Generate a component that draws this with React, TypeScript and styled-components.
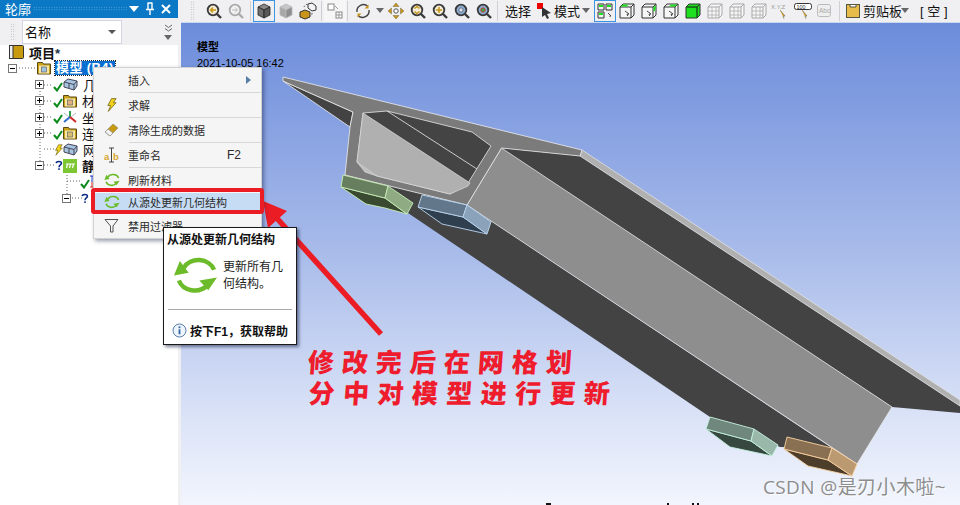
import React from "react";
import styled, { createGlobalStyle } from "styled-components";

const Global = createGlobalStyle`
  html, body { margin: 0; padding: 0; width: 960px; height: 505px; overflow: hidden; background: #f0f0f2; }
  #root { width: 960px; height: 505px; }
  * { box-sizing: border-box; }
`;

const UI = `"Liberation Sans", "Noto Sans CJK SC", sans-serif`;

const Page = styled.div`
  position: relative; display: flex; width: 960px; height: 505px; overflow: hidden;
  font-family: ${UI}; color: #111;
`;
const Sidebar = styled.aside`
  width: 178px; margin-right: 3px; flex: none; display: flex; flex-direction: column; background: #fff;
`;
const TitleBar = styled.header`
  height: 18px; background: #0a78c4; color: #fff; display: flex; align-items: center;
  padding: 0 9px 1px 5px; font-size: 13px; gap: 2px; white-space: nowrap;
`;
const TitleText = styled.span`flex: none;`;
const TitleGrip = styled.span`
  width: 94px; height: 5px; flex: none;
  background-image: radial-gradient(circle, #6db4e4 0.7px, transparent 0.8px);
  background-size: 2.5px 2.5px;
`;
const TitleIcons = styled.span`display: flex; align-items: center; gap: 6px; margin-left: auto;`;
const FilterRow = styled.div`
  height: 27px; background: #f0f0f2; display: flex; align-items: center; padding: 0 3px 0 10px; gap: 6px;
`;
const Grip = styled.span<{ $h: number }>`
  width: 6px; height: ${p => p.$h}px; flex: none;
  background-image: radial-gradient(circle, #a8a8a8 0.7px, transparent 0.8px);
  background-size: 2.5px 2.5px;
`;
const FilterSelect = styled.div`
  width: 100px; height: 24px; background: #fff; border: 1px solid #d4d4e2; display: flex; align-items: center;
  justify-content: space-between; padding: 0 5px 0 2px; font-size: 13px;
`;
const Caret = styled.span`
  width: 0; height: 0; border-left: 4px solid transparent; border-right: 4px solid transparent;
  border-top: 4px solid #555;
`;
const FilterMore = styled.div`
  margin-left: auto; width: 14px; display: flex; flex-direction: column; align-items: center; gap: 3px; padding-top: 1px;
`;
const Tree = styled.div`position: relative; flex: 1;`;
const TreeLines = styled.svg`position: absolute; left: 0; top: 0; pointer-events: none;`;
const Row = styled.div<{ $indent: number }>`
  position: relative; height: 16.25px; display: flex; align-items: center; padding: 0 0 2px ${p => p.$indent}px;
  font-size: 13px; white-space: nowrap;
  & > * { flex: none; }
`;
/* rows whose labels run under the context menu stop at its left edge */
const CoveredRow = styled(Row)`width: 94px; overflow: hidden;`;
const Expander = styled.span`
  width: 9px; height: 9px; flex: none; border: 1px solid #777; background: #fff; position: relative; display: block;
  &::before { content: ""; position: absolute; left: 1px; top: 3px; width: 5px; height: 1px; background: #000; }
`;
const ExpanderPlus = styled(Expander)`
  &::after { content: ""; position: absolute; left: 3px; top: 1px; width: 1px; height: 5px; background: #000; }
`;
const Slot = styled.span<{ $w: number }>`
  width: ${p => p.$w}px; flex: none; display: flex; align-items: center; justify-content: flex-end;
`;
const CheckMark = styled.svg`margin-top: 4px; flex: none;`;
const Label = styled.span<{ $bold?: boolean }>`
  margin-left: 5px; font-weight: ${p => (p.$bold ? 700 : 400)};
`;
const Selected = styled.span`
  margin-left: 4px; padding: 0 1px; background: #0a6fd0; color: #fff; font-weight: 700;
  outline: 1px dotted #222; line-height: 14px; letter-spacing: .4px;
`;
const Star = styled.span`color: #234;`;

const Main = styled.main`flex: 1; display: flex; flex-direction: column; min-width: 0;`;
const Toolbar = styled.nav`
  height: 23px; flex: none; display: flex; align-items: center; padding: 0 0 1px 9px; background: #f0f0f2;
  border-bottom: 1px solid #c9d6ee; font-size: 13px;
`;
const ToolGrip = styled(Grip)`margin-right: 8px; width: 5px;`;
const ToolBtn = styled.span<{ $active?: boolean; $dim?: boolean }>`
  width: 22px; height: 22px; flex: none; display: flex; align-items: center; justify-content: center;
  border: 1px solid ${p => (p.$active ? "#3d94e0" : "transparent")};
  background: ${p => (p.$dim ? "#f6f6f7" : "transparent")};
`;
const Sep = styled.span<{ $m: number }>`
  width: 1px; height: 20px; background: #d0d0d4; flex: none; margin: 0 ${p => p.$m}px;
`;
const ToolCaret = styled.span<{ $pull?: number }>`
  width: 11px; flex: none; display: flex; justify-content: center; margin-left: ${p => p.$pull ?? 0}px;
`;
const ToolText = styled.span<{ $ml?: number }>`
  flex: none; margin-left: ${p => p.$ml ?? 0}px; white-space: nowrap;
`;
const Viewport = styled.section`
  position: relative; flex: 1; overflow: hidden;
  background: linear-gradient(180deg, #6c8cdb 0%, #a9bcea 48%, #dbe3f7 82%, #f2f5fd 100%);
`;
const Drawing = styled.svg`position: absolute; left: 0; top: 0;`;
const ModelTitle = styled.div`
  position: absolute; left: 16px; top: 16px; font-size: 11px; line-height: 16px; color: #000;
`;
const ModelName = styled.div`font-weight: 700;`;
const Annotation = styled.div`
  position: absolute; left: 126px; top: 322px; color: #ee1c2c; font-family: "Noto Sans CJK SC", sans-serif;
  font-weight: 900; font-size: 26px; line-height: 31px; white-space: nowrap;
  transform: skewX(-4deg);
`;
const AnnotationLine = styled.div<{ $ml: number; $gap: number }>`
  margin-left: ${p => p.$ml}px; letter-spacing: ${p => p.$gap}px;
`;
const Watermark = styled.div`
  position: absolute; right: 14px; bottom: 8px; font-size: 19px; line-height: 20px; letter-spacing: .4px; color: #8d8d8d;
  font-family: "Open Sans", "Noto Sans CJK SC", sans-serif; text-shadow: 1px 1px 1px #fff;
`;

const Menu = styled.div`
  position: absolute; left: 93px; top: 67px; width: 169px; height: 172px; background: #f5f5f5;
  border: 1px solid #d2d2d2; box-shadow: 2px 2px 4px rgba(20, 30, 70, .45); font-size: 11px; color: #2b2b2b;
`;
const MenuRow = styled.div<{ $h?: number; $hot?: boolean }>`
  display: flex; align-items: center; height: ${p => p.$h ?? 25}px; position: relative; padding-bottom: ${p => (p.$hot ? 3 : 2)}px;
  background: ${p => (p.$hot ? "#c6dcf4" : "transparent")};
`;
const MenuIcon = styled.span`width: 35px; flex: none; display: flex; justify-content: center; margin-right: -1px;`;
const MenuText = styled.span`flex: 1;`;
const Shortcut = styled.span`margin-right: 20px; font-size: 12px;`;
const SubArrow = styled.span`
  width: 0; height: 0; margin-right: 10px; border-top: 4px solid transparent; border-bottom: 4px solid transparent;
  border-left: 5px solid #5a7ca8;
`;
const MenuSep = styled.div`height: 1px; margin: -1px 0 0 35px; background: #d8d8d8; position: relative;`;
const RedBox = styled.div`
  position: absolute; left: -3px; right: -3px; top: -5px; bottom: 0; border: 4px solid #ec1c24; border-radius: 3px;
`;
const Tip = styled.div`
  position: absolute; left: 163px; top: 227px; width: 134px; height: 118px; background: #fff; border: 1px solid #1a1a1a;
  box-shadow: 2px 2px 3px rgba(20, 30, 70, .55); padding: 4px 4px 0 3px; display: flex; flex-direction: column;
`;
const TipTitle = styled.div`font-size: 12px; font-weight: 700; line-height: 16px; white-space: nowrap;`;
const TipBody = styled.div`
  display: flex; align-items: center; gap: 5px; margin-top: 5px; padding-left: 6px; font-size: 12px; line-height: 17px; color: #222;
  white-space: nowrap;
  & > svg { flex: none; }
  & > span { margin-top: 4px; }
`;
const TipRule = styled.div`height: 1px; background: #aaa; margin: 14px 0 0 1px;`;
const TipHelp = styled.div`
  display: flex; align-items: center; gap: 3px; margin-top: 12px; padding-left: 5px; font-size: 12px; font-weight: 700; white-space: nowrap;
  & > svg { flex: none; }
`;

const Check = () => (
  <CheckMark width="10" height="10" viewBox="0 0 10 10"><path d="M1 5l3 3.500L9 1" fill="none" stroke="#0a8a1a" strokeWidth="2" /></CheckMark>
);
const Question = () => (
  <svg width="8" height="13" viewBox="0 0 10 13"><path d="M1.500 3.500C2 .8 8 .6 8 3.600c0 2.200-3 2.300-3 5" fill="none" stroke="#0a2a8a" strokeWidth="2" /><rect x="4" y="10" width="2" height="2" fill="#0a2a8a" /></svg>
);
const Bolt = ({ size = 11 }: { size?: number }) => (
  <svg width={size} height={size + 3} viewBox="0 0 12 15"><path d="M6 .5h5L8 5h3L2.500 14.500 5 8H2z" fill="#f2d21c" stroke="#6a5a10" strokeWidth=".8" /></svg>
);
const Book = () => (
  <svg width="15" height="14" viewBox="0 0 15 14"><rect x=".5" y=".5" width="14" height="13" rx="1" fill="#c89a10" stroke="#333" /><rect x=".5" y=".5" width="3.500" height="13" fill="#eee" stroke="#333" /></svg>
);
const Folder = ({ inner }: { inner: string }) => (
  <svg width="14" height="14" viewBox="0 0 14 14"><path d="M.5 3V1.500h5l1 1.500h7v10H.5z" fill="#c9a21a" stroke="#5a4a10" /><rect x="2" y="4.500" width="10" height="8" fill="#f5e6a8" /><rect x="4.500" y="6" width="5" height="5" fill={inner} stroke="#555" strokeWidth=".6" /></svg>
);
const Blocks = () => (
  <svg width="15" height="14" viewBox="0 0 15 14"><path d="M1 4l4-3 9 2v5l-3 4-10-3z" fill="#a8c4e0" stroke="#445" /><path d="M1 4l10 2.500V12M11 6.500L14 3M6 5.200V10" fill="none" stroke="#445" /></svg>
);
const Axes = () => (
  <svg width="14" height="14" viewBox="0 0 14 14"><path d="M7 7V1" stroke="#2aa050" strokeWidth="2" /><path d="M7 7L1 12" stroke="#3070d0" strokeWidth="2" /><path d="M7 7l6 5" stroke="#d02828" strokeWidth="2" /><path d="M1 3l5 4M13 3L8 7" stroke="#bbb" /></svg>
);
const GreenBox = () => (
  <svg width="14" height="14" viewBox="0 0 14 14"><rect width="14" height="14" fill="#7dc832" /><path d="M3 5h9M4.500 5L3.500 9M7.500 5L6.500 9M10.500 5L9.500 9" stroke="#fff" strokeWidth="1.200" /></svg>
);
const BeamSliver = () => (
  <svg width="4" height="14" viewBox="0 0 4 14"><path d="M0 1h4M2 1v6" stroke="#1a3ac8" /><path d="M2 7v5M0 12h4" stroke="#d82020" /></svg>
);
const Refresh = ({ size = 16 }: { size?: number }) => (
  <svg width={size} height={size * 0.94} viewBox="0 0 46 43">
    <path d="M11 15A17 15 0 0 1 42 17M6 28A17 15 0 0 0 35 33" fill="none" stroke="#6cbb2a" strokeWidth="4.500" />
    <path d="M1 23L7 8 16 20zM27 28L45 25 36 38z" fill="#6cbb2a" />
  </svg>
);
const Eraser = () => (
  <svg width="15" height="15" viewBox="0 0 15 15"><path d="M1 10l8-8 5 4-8 8z" fill="#c89a10" stroke="#887" strokeWidth=".6" /><path d="M1 10l3-3 5 4-3 3z" fill="#f3f3f3" stroke="#888" strokeWidth=".7" /></svg>
);
const RenameIcon = () => (
  <svg width="16" height="16" viewBox="0 0 16 16">
    <text x="0" y="13" fontSize="9.500" fontWeight="700" fill="#d8a52c" fontFamily="Liberation Sans">a</text>
    <text x="9" y="13" fontSize="9.500" fontWeight="700" fill="#d8a52c" fontFamily="Liberation Sans">b</text>
    <path d="M5 1h5M5 15h5M7.500 1v14" stroke="#444" />
  </svg>
);
const Funnel = () => (
  <svg width="15" height="15" viewBox="0 0 15 15"><path d="M1 1.500h13L9 8v6H6.500V8z" fill="none" stroke="#555" /></svg>
);
const Info = () => (
  <svg width="15" height="15" viewBox="0 0 15 15"><circle cx="7.500" cy="7.500" r="6.500" fill="#eef4fb" stroke="#5a7ea8" /><rect x="6.600" y="6.300" width="1.800" height="5" fill="#2f66a8" /><rect x="6.600" y="3.400" width="1.800" height="1.800" fill="#2f66a8" /></svg>
);

const Mag = ({ fill = "#f3ecd8", ring = "#3a3a3a", mark }: { fill?: string; ring?: string; mark: React.ReactNode }) => (
  <svg width="16" height="16" viewBox="0 0 16 16">
    <circle cx="7" cy="7" r="5.300" fill={fill} stroke={ring} strokeWidth="1.800" />
    <path d="M11 11l4 4" stroke={ring} strokeWidth="2.400" />
    {mark}
  </svg>
);
const Gold = "#c8951a";
const Cube = ({ top, left, right, line }: { top: string; left: string; right: string; line: string }) => (
  <svg width="16" height="16" viewBox="0 0 16 16">
    <path d="M8 1l6 3-6 3-6-3z" fill={top} stroke={line} strokeWidth=".8" />
    <path d="M2 4l6 3v8l-6-3z" fill={left} stroke={line} strokeWidth=".8" />
    <path d="M14 4L8 7v8l6-3z" fill={right} stroke={line} strokeWidth=".8" />
  </svg>
);
const FaceCube = ({ face, dim }: { face: string; dim?: boolean }) => {
  const c = dim ? "#a8a8a8" : "#333";
  const g = "#1fe01f";
  return (
    <svg width="16" height="16" viewBox="0 0 16 16">
      <path d="M1 4l3-3h11v11l-3 3H1z" fill={face === "all" ? g : "#f6f6f6"} stroke={c} />
      <path d="M1 4h11v11M12 4l3-3" fill="none" stroke={c} />
      {face === "top" && <path d="M1.500 3.600L4 1.500h6L7.500 3.600z" fill={g} />}
      {face === "right" && <path d="M12.500 4L14.600 2v5l-2.100 2z" fill={g} />}
      {face === "corner" && <path d="M8 1.500h6.500L12 3.600H6z" fill={g} />}
      {face === "grid" && <path d="M5 4v11M9 4v11M1 8h11M1 12h11" stroke={c} strokeWidth=".7" />}
      {face !== "grid" && face !== "all" && <path d="M6 8l4 3-2 .4.8 1.600" fill="none" stroke="#444" />}
      {face === "all" && <path d="M12 4v11M1 4h11" stroke="#0a6a0a" />}
    </svg>
  );
};
const SmallCaret = () => (
  <svg width="8" height="5" viewBox="0 0 8 5"><path d="M0 0h8L4 5z" fill="#666" /></svg>
);

const m = (s: string) => <path d={s} stroke={Gold} strokeWidth="1.500" fill="none" />;

const Model = () => (
  <Drawing width="779" height="482" viewBox="181 23 779 482">
    <polygon points="345,175 467,205 832,448 780,447 710,417 408,213" fill="#434343" />
    <polygon points="283,81 353,112 350,127" fill="#434343" stroke="#eee" strokeWidth=".8" />
    <polygon points="501,148 580,156 960,406 960,413 892,407" fill="#434343" />
    <polygon points="582,150 960,400 960,406 580,156" fill="#b0b0b0" stroke="#e8e8e8" strokeWidth=".7" />
    <polygon points="501.5,148 892,407 857,464 467,205" fill="#8e8e8e" stroke="#eee" strokeWidth=".7" />
    <polygon points="283,77 582,150 580,156 501.5,148 467,205 345,175 350,127 353,112 283,81" fill="#7b7b7b" stroke="#ececec" strokeWidth=".8" />
    <polygon points="363,113 387,111 472,132 491,146 468,183 450,194 377,176 357,162" fill="#444" stroke="#e8e8e8" strokeWidth=".8" />
    <polygon points="363,113 470,183 468,186 450,194 377,176 357,162" fill="#b0b0b0" stroke="#ddd" strokeWidth=".7" />
    <path d="M357,162 L365,172 377,176" stroke="#ddd" strokeWidth=".7" fill="#c0c0c0" />
    <path d="M387,111 L477,169" stroke="#eee" strokeWidth=".8" />
    <g stroke="#c9efb8" strokeWidth=".9">
      <polygon points="341,187 385,198 407,214 385,208 366,204" fill="#394a30" />
      <polygon points="343,175 388,186 385,198 341,187" fill="#677f5e" />
      <polygon points="388,186 413,203 407,214 385,198" fill="#8eab84" />
    </g>
    <g stroke="#bcd6f0" strokeWidth=".9">
      <polygon points="418,207 463,217 487,234 442,224" fill="#2f3f4e" />
      <polygon points="422,195 467,205 463,217 418,207" fill="#62778a" />
      <polygon points="467,205 491,222 487,234 463,217" fill="#8aa3ba" />
    </g>
    <g stroke="#c4f0e0" strokeWidth=".9">
      <polygon points="706,429 751,441 772,456 730,447" fill="#36483f" />
      <polygon points="710,417 754,429 751,441 706,429" fill="#6f877d" />
      <polygon points="754,429 778,445 772,456 751,441" fill="#9ab8aa" />
    </g>
    <g stroke="#f8d0a0" strokeWidth=".9">
      <polygon points="784,449 828,460 852,476 808,466" fill="#4d3d2b" />
      <polygon points="787,437 832,448 828,460 784,449" fill="#8a7052" />
      <polygon points="832,448 857,464 852,476 828,460" fill="#bb9a72" />
    </g>
    <path d="M546 504h5M668 503v2M693 503v2M698 503v2" stroke="#111" strokeWidth="2" />
    <path d="M381 334L274 215" stroke="#ec1c24" strokeWidth="5.500" />
    <polygon points="263,201 287,211 268,228" fill="#ec1c24" />
  </Drawing>
);

const lines = "M40 52V61M13 70V72M16 68H37M40 85V165M44 85H52M44 101H52M44 117H52M44 133H52M44 149H62M44 165H55M67 172V194M67 181H80M72 198H82";

export default function App() {
  return (
    <Page>
      <Global />
      <Sidebar>
        <TitleBar>
          <TitleText>轮廓</TitleText>
          <TitleGrip />
          <TitleIcons>
            <svg width="10" height="6" viewBox="0 0 10 6"><path d="M0 0h10L5 6z" fill="#fff" /></svg>
            <svg width="10" height="13" viewBox="0 0 10 13"><path d="M2.500 1h5M3 1v6M7 1v6M1 7.500h8M5 8v5" stroke="#fff" strokeWidth="1.400" fill="none" /></svg>
            <svg width="10" height="10" viewBox="0 0 10 10"><path d="M1 1l8 8M9 1L1 9" stroke="#fff" strokeWidth="2" /></svg>
          </TitleIcons>
        </TitleBar>
        <FilterRow>
          <Grip $h={18} />
          <FilterSelect>名称<Caret /></FilterSelect>
          <FilterMore>
            <svg width="9" height="8" viewBox="0 0 9 8"><path d="M1 1l3.500 2.500L8 1M1 4.500L4.500 7 8 4.500" fill="none" stroke="#666" /></svg>
            <SmallCaret />
          </FilterMore>
        </FilterRow>
        <Tree>
          <TreeLines width="178" height="170">
            <path d={lines} transform="translate(0,-45)" stroke="#666" strokeDasharray="1 2" fill="none" />
          </TreeLines>
          <Row $indent={9}><Book /><Label $bold>项目<Star>*</Star></Label></Row>
          <Row $indent={8}>
            <Expander /><Slot $w={20} /><Folder inner="#9cc4e4" />
            <Selected>模型 (B4)</Selected>
          </Row>
          <CoveredRow $indent={35}><ExpanderPlus /><Slot $w={19}><Check /></Slot><Blocks /><Label>几何</Label></CoveredRow>
          <CoveredRow $indent={35}><ExpanderPlus /><Slot $w={19}><Check /></Slot><Folder inner="#e0b080" /><Label>材料</Label></CoveredRow>
          <CoveredRow $indent={35}><ExpanderPlus /><Slot $w={19}><Check /></Slot><Axes /><Label>坐标系</Label></CoveredRow>
          <CoveredRow $indent={35}><ExpanderPlus /><Slot $w={19}><Check /></Slot><Folder inner="#d8c070" /><Label>连接</Label></CoveredRow>
          <CoveredRow $indent={54}><Slot $w={9}><Bolt size={9} /></Slot><Blocks /><Label>网格</Label></CoveredRow>
          <CoveredRow $indent={35}><Expander /><Slot $w={19}><Question /></Slot><GreenBox /><Label $bold>静态结构</Label></CoveredRow>
          <CoveredRow $indent={80}><Slot $w={10}><Check /></Slot><Slot $w={4}><BeamSliver /></Slot></CoveredRow>
          <CoveredRow $indent={62}><Expander /><Slot $w={18}><Question /></Slot></CoveredRow>
        </Tree>
      </Sidebar>
      <Main>
        <Toolbar>
          <ToolGrip $h={20} />
          <ToolBtn><Mag mark={m("M10 7H4.500M7 4.500L4.500 7 7 9.500")} /></ToolBtn>
          <ToolBtn><Mag ring="#aaa" fill="#f4f4f4" mark={<path d="M4 7h5.500M7 4.500L9.500 7 7 9.500" stroke="#bbb" fill="none" />} /></ToolBtn>
          <Sep $m={2.5} />
          <ToolBtn $active><Cube top="#8a8a8a" left="#6e6e6e" right="#585858" line="#222" /></ToolBtn>
          <ToolBtn><Cube top="#c6c6c6" left="#a8a8a8" right="#8e8e8e" line="#b8b8b8" /></ToolBtn>
          <ToolBtn>
            <svg width="18" height="18" viewBox="0 0 18 18">
              <path d="M1 10l5-2 5 2v5l-5 2-5-2z" fill="#c8951a" stroke="#333" />
              <path d="M9 2l4-1 4 3v4l-4 1-4-3z" fill="#f4f4f4" stroke="#333" />
              <path d="M5 5A5 5 0 0 1 9 2M13 11a4 4 0 0 1-1 3" stroke="#444" strokeDasharray="1.500 1.500" fill="none" />
            </svg>
          </ToolBtn>
          <Sep $m={2} />
          <ToolBtn $dim>
            <svg width="16" height="16" viewBox="0 0 16 16">
              <rect x="1" y="1" width="6" height="6" fill="#fff" stroke="#888" />
              <rect x="9" y="9" width="6" height="6" fill="#fff" stroke="#888" />
              <path d="M12 9v6M9 12h6M8 3l3 3" stroke="#999" fill="none" />
            </svg>
          </ToolBtn>
          <Sep $m={1} />
          <Slot $w={3} />
          <ToolBtn>
            <svg width="16" height="16" viewBox="0 0 16 16">
              <path d="M2 9A6.500 6.500 0 0 1 13 3.500" stroke="#444" strokeWidth="1.400" fill="none" />
              <path d="M14 7A6.500 6.500 0 0 1 3 12.500" stroke="#444" strokeWidth="1.400" fill="none" />
              <path d="M13.500 1.500v4h-4M2.500 14.500v-4h4" fill={Gold} />
            </svg>
          </ToolBtn>
          <ToolCaret><SmallCaret /></ToolCaret>
          <ToolBtn>
            <svg width="16" height="16" viewBox="0 0 16 16">
              <path d="M8 0l3 3.500H5zM8 16l-3-3.500h6zM0 8l3.500-3v6zM16 8l-3.500 3V5z" fill={Gold} stroke="#553" strokeWidth=".4" />
              <circle cx="8" cy="8" r="2.200" fill="#fff" stroke="#555" />
            </svg>
          </ToolBtn>
          <ToolBtn><Mag mark={m("M4.500 5.500L7 3.500l2.500 2M4.500 8.500L7 10.500l2.500-2")} /></ToolBtn>
          <ToolBtn><Mag mark={m("M4 7h6M7 4v6")} /></ToolBtn>
          <ToolBtn><Mag fill="#8fb0d8" mark={<circle cx="7" cy="7" r="2.200" fill="#d8e6f4" stroke="#667" />} /></ToolBtn>
          <ToolBtn><Mag fill="#8fb0d8" mark={<circle cx="7" cy="7" r="2.200" fill="#38b048" stroke="#c33" />} /></ToolBtn>
          <Sep $m={2} />
          <ToolText $ml={5}>选择</ToolText>
          <Slot $w={6} />
          <svg width="16" height="20" viewBox="0 0 16 20" style={{ flex: "none" }}>
            <rect x="0" y="2" width="6" height="6" fill="#ee0000" />
            <path d="M5 6l9 6-4 1 2 4-2 1-2-4-3 2z" fill="#333" />
          </svg>
          <ToolText $ml={1}>模式</ToolText>
          <ToolCaret><SmallCaret /></ToolCaret>
          <Slot $w={3} />
          <ToolBtn $active>
            <svg width="16" height="16" viewBox="0 0 16 16">
              <path d="M1 1h6v6H1zM9 1h6v6H9zM1 9h6v6H1z" fill="none" stroke="#333" />
              <path d="M2 2h4v2H2zM10 2h4v2h-4zM2 10h4v2H2z" fill="#1fe01f" />
              <path d="M11 10l3 3-1.500.300" stroke="#444" fill="none" />
            </svg>
          </ToolBtn>
          <ToolBtn><FaceCube face="top" /></ToolBtn>
          <ToolBtn><FaceCube face="right" /></ToolBtn>
          <ToolBtn><FaceCube face="corner" /></ToolBtn>
          <ToolBtn><FaceCube face="all" /></ToolBtn>
          <ToolBtn><FaceCube face="grid" dim /></ToolBtn>
          <ToolBtn><FaceCube face="grid" dim /></ToolBtn>
          <ToolBtn><FaceCube face="grid" dim /></ToolBtn>
          <ToolBtn>
            <svg width="20" height="16" viewBox="0 0 20 16">
              <text x="0" y="5.500" fontSize="6" fill="#999" fontFamily="Liberation Sans">X.Y.Z</text>
              <path d="M9 7l5 6-2 .300 1 2.500" fill="#d8a020" stroke="#665" strokeWidth=".6" />
            </svg>
          </ToolBtn>
          <ToolBtn>
            <svg width="18" height="16" viewBox="0 0 18 16">
              <rect x=".5" y=".5" width="17" height="6" rx="2" fill="#fff" stroke="#333" />
              <text x="2.500" y="5.500" fontSize="5.500" fill="#333" fontFamily="Liberation Sans">100</text>
              <path d="M8 7l5 6-2 .300 1 2.500" fill="#d8a020" stroke="#665" strokeWidth=".6" />
            </svg>
          </ToolBtn>
          <ToolBtn>
            <svg width="16" height="16" viewBox="0 0 16 16">
              <rect x=".5" y="1.500" width="13" height="12" rx="2" fill="#eee" stroke="#bbb" />
              <text x="2" y="10" fontSize="6.500" fill="#aaa" fontFamily="Liberation Sans">Abc</text>
            </svg>
          </ToolBtn>
          <Sep $m={3} />
          <Slot $w={3} />
          <svg width="14" height="16" viewBox="0 0 14 16" style={{ flex: "none" }}>
            <rect x=".5" y="1.500" width="13" height="13" fill="#e8bc4a" stroke="#554" />
            <path d="M4 1.500h6V4H4z" fill="#fff" stroke="#554" />
          </svg>
          <ToolText $ml={3}>剪贴板</ToolText>
          <ToolCaret $pull={-3}><SmallCaret /></ToolCaret>
          <ToolText $ml={10}>[ 空 ]</ToolText>
        </Toolbar>
        <Viewport>
          <Model />
          <ModelTitle>
            <ModelName>模型</ModelName>
            2021-10-05 16:42
          </ModelTitle>
          <Annotation>
            <AnnotationLine $ml={0} $gap={8}>修改完后在网格划</AnnotationLine>
            <AnnotationLine $ml={3} $gap={8.4}>分中对模型进行更新</AnnotationLine>
          </Annotation>
          <Watermark>CSDN @是刃小木啦~</Watermark>
        </Viewport>
      </Main>
      <Menu>
        <MenuRow><MenuIcon /><MenuText>插入</MenuText><SubArrow /></MenuRow>
        <MenuSep />
        <MenuRow><MenuIcon><Bolt /></MenuIcon><MenuText>求解</MenuText></MenuRow>
        <MenuSep />
        <MenuRow><MenuIcon><Eraser /></MenuIcon><MenuText>清除生成的数据</MenuText></MenuRow>
        <MenuSep />
        <MenuRow><MenuIcon><RenameIcon /></MenuIcon><MenuText>重命名</MenuText><Shortcut>F2</Shortcut></MenuRow>
        <MenuSep />
        <MenuRow><MenuIcon><Refresh /></MenuIcon><MenuText>刷新材料</MenuText></MenuRow>
        <MenuRow $h={21} $hot>
          <MenuIcon><Refresh /></MenuIcon><MenuText>从源处更新几何结构</MenuText>
          <RedBox />
        </MenuRow>
        <MenuRow><MenuIcon><Funnel /></MenuIcon><MenuText>禁用过滤器</MenuText></MenuRow>
      </Menu>
      <Tip>
        <TipTitle>从源处更新几何结构</TipTitle>
        <TipBody>
          <Refresh size={45} />
          <span>更新所有几<br />何结构。</span>
        </TipBody>
        <TipRule />
        <TipHelp><Info />按下F1，获取帮助</TipHelp>
      </Tip>
    </Page>
  );
}
